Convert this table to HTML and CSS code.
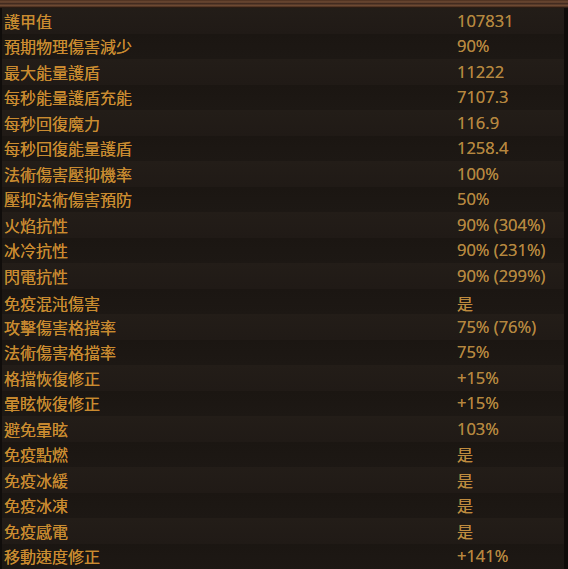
FILE: index.html
```html
<!DOCTYPE html>
<html lang="zh-Hant">
<head>
<meta charset="utf-8">
<link rel="stylesheet" href="styles.css">
</head>
<body>
<div class="panel">
  <div class="topbar"></div>
  <div class="rows">
    <div class="row"><span class="label">護甲值</span><span class="value">107831</span></div>
    <div class="row"><span class="label">預期物理傷害減少</span><span class="value">90%</span></div>
    <div class="row"><span class="label">最大能量護盾</span><span class="value">11222</span></div>
    <div class="row"><span class="label">每秒能量護盾充能</span><span class="value">7107.3</span></div>
    <div class="row"><span class="label">每秒回復魔力</span><span class="value">116.9</span></div>
    <div class="row"><span class="label">每秒回復能量護盾</span><span class="value">1258.4</span></div>
    <div class="row"><span class="label">法術傷害壓抑機率</span><span class="value">100%</span></div>
    <div class="row"><span class="label">壓抑法術傷害預防</span><span class="value">50%</span></div>
    <div class="row"><span class="label">火焰抗性</span><span class="value">90% (304%)</span></div>
    <div class="row"><span class="label">冰冷抗性</span><span class="value">90% (231%)</span></div>
    <div class="row"><span class="label">閃電抗性</span><span class="value">90% (299%)</span></div>
    <div class="row low"><span class="label">免疫混沌傷害</span><span class="value cjk">是</span></div>
    <div class="row"><span class="label">攻擊傷害格擋率</span><span class="value">75% (76%)</span></div>
    <div class="row"><span class="label">法術傷害格擋率</span><span class="value">75%</span></div>
    <div class="row"><span class="label">格擋恢復修正</span><span class="value">+15%</span></div>
    <div class="row"><span class="label">暈眩恢復修正</span><span class="value">+15%</span></div>
    <div class="row"><span class="label">避免暈眩</span><span class="value">103%</span></div>
    <div class="row"><span class="label">免疫點燃</span><span class="value cjk">是</span></div>
    <div class="row"><span class="label">免疫冰緩</span><span class="value cjk">是</span></div>
    <div class="row"><span class="label">免疫冰凍</span><span class="value cjk">是</span></div>
    <div class="row"><span class="label">免疫感電</span><span class="value cjk">是</span></div>
    <div class="row"><span class="label">移動速度修正</span><span class="value">+141%</span></div>
  </div>
</div>
</body>
</html>
```
FILE: styles.css
```css
html, body {
  margin: 0;
  padding: 0;
  background: #0d0b09;
}
.panel {
  width: 568px;
  height: 569px;
  overflow: hidden;
  background: #1d1814;
  display: flex;
  flex-direction: column;
}
.topbar {
  height: 8px;
  flex: none;
  background: linear-gradient(to bottom, #4a2e1e 0, #6e4a33 2px, #33211a 4px, #7a5238 5px, #452c1e 7px, #120d0a 8px);
}
.rows {
  flex: 1;
  display: flex;
  flex-direction: column;
  border-left: 2px solid #100d0b;
  border-right: 4px solid #0e0b09;
  box-shadow: inset -1px 0 0 #3d332b;
}
.row {
  height: 25.5px;
  flex: none;
  display: flex;
  align-items: center;
}
.row:nth-child(odd) {
  background: linear-gradient(to bottom, #231d18, #201a16);
}
.row:nth-child(even) {
  background: linear-gradient(to bottom, #1b1612, #1d1814);
}
.label {
  width: 453px;
  padding-left: 2px;
  font-family: "Noto Sans CJK TC", sans-serif;
  font-size: 16px;
  color: #c98b30;
  line-height: 1;
  text-shadow: 0 0 0.6px #c98b30;
}
.value {
  font-family: "Open Sans", "Noto Sans CJK TC", sans-serif;
  font-size: 16.5px;
  color: #b5873f;
  line-height: 1;
  text-shadow: 0 0 0.5px #b5873f;
}
.value.cjk {
  font-family: "Noto Sans CJK TC", sans-serif;
  font-size: 16px;
  color: #bf8b3e;
}
.low .label, .low .value {
  transform: translateY(2px);
}
```
